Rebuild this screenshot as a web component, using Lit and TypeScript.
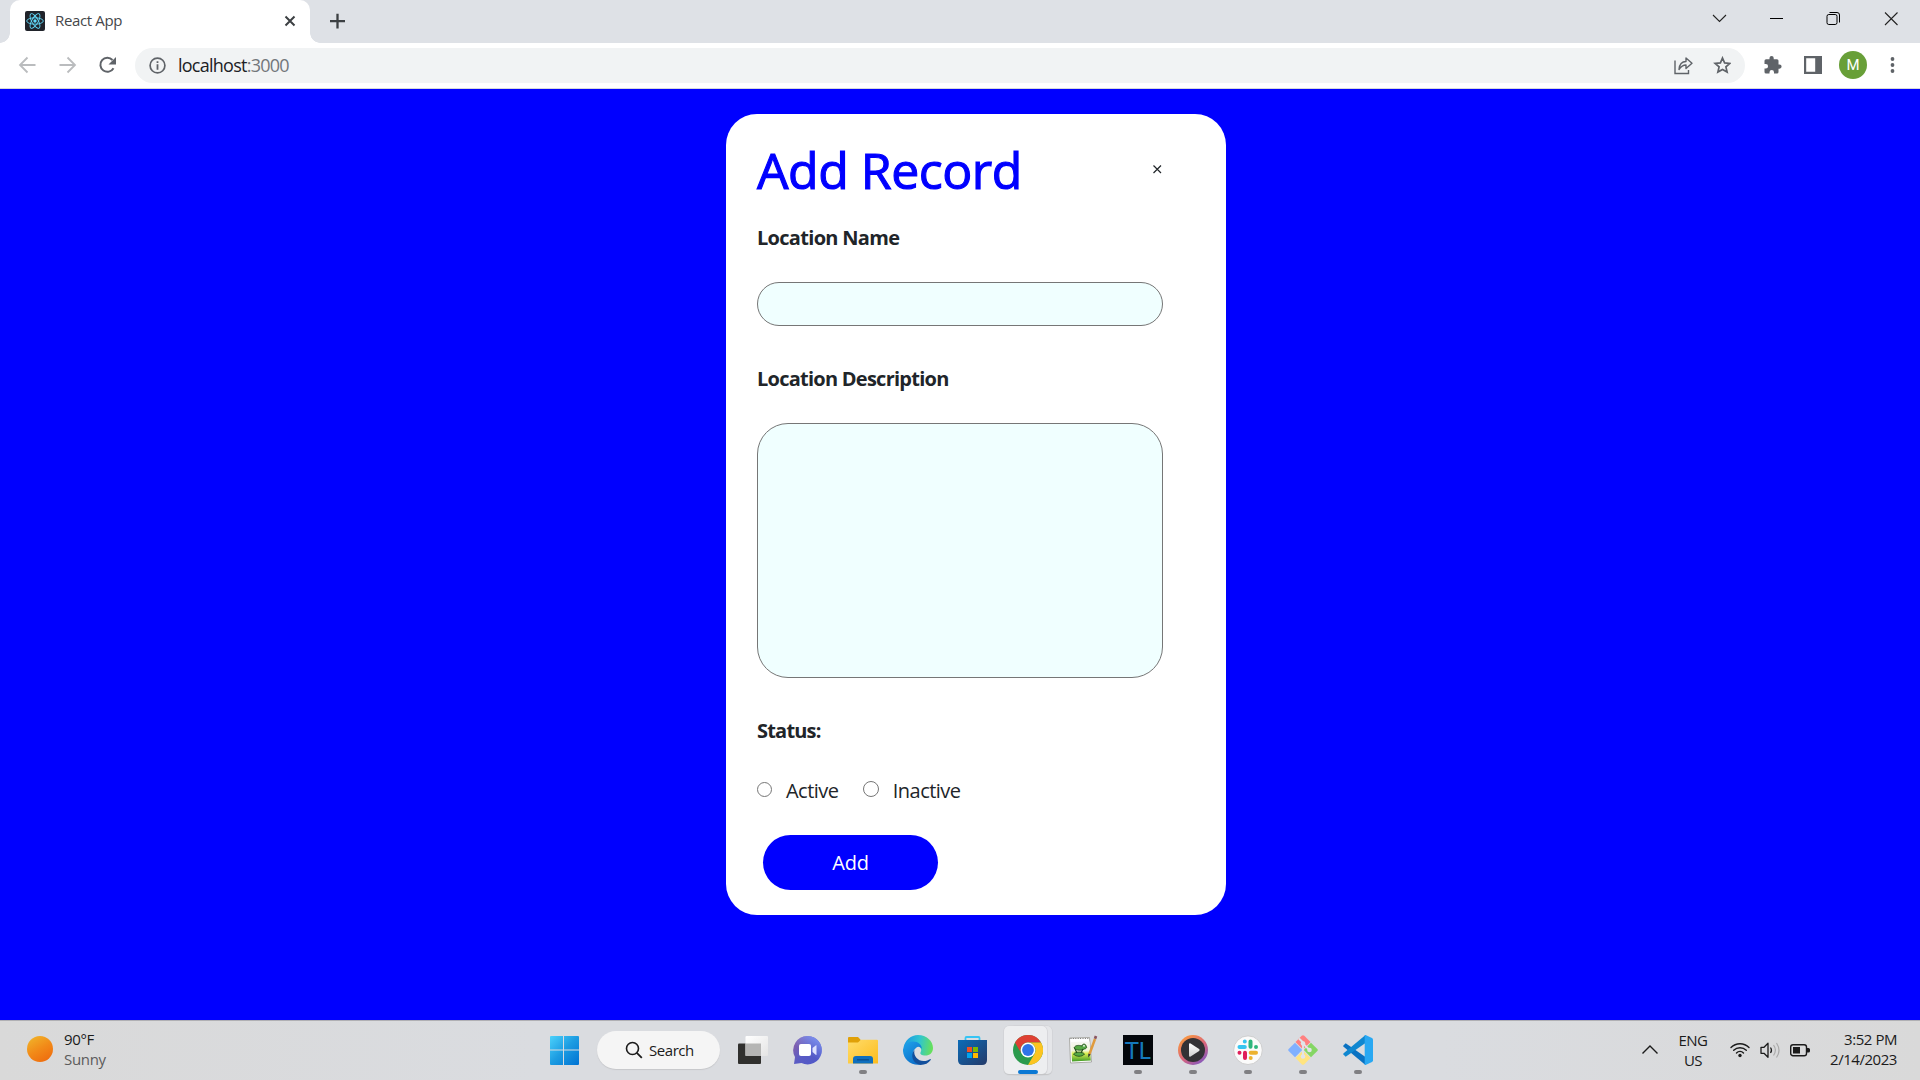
import { LitElement, html, css, svg } from "lit";
import { customElement } from "lit/decorators.js";

const icon = (w: number, h: number, body: unknown) =>
  html`<svg width=${w} height=${h} viewBox="0 0 ${w} ${h}" fill="none">${body}</svg>`;

const reactLogo = icon(20, 20, svg`
  <rect width="20" height="20" rx="2" fill="#20232a"/>
  <g stroke="#61dafb" stroke-width=".9">
    <ellipse cx="10" cy="10" rx="8.3" ry="3.2"/>
    <ellipse cx="10" cy="10" rx="8.3" ry="3.2" transform="rotate(60 10 10)"/>
    <ellipse cx="10" cy="10" rx="8.3" ry="3.2" transform="rotate(120 10 10)"/>
  </g><circle cx="10" cy="10" r="1.7" fill="#61dafb"/>`);

const windowsLogo = icon(30, 30, svg`
  <defs><linearGradient id="win" x1="0" y1="0" x2="30" y2="30" gradientUnits="userSpaceOnUse">
    <stop stop-color="#4fd5fd"/><stop offset=".5" stop-color="#1d9de2"/><stop offset="1" stop-color="#0072d3"/></linearGradient></defs>
  <path fill="url(#win)" d="M2 1h12v13.500H1V2a1 1 0 0 1 1-1zM15 1h14a1 1 0 0 1 1 1v12.500H15zM1 15.500h13V30H2a1 1 0 0 1-1-1zM15 15.500h15V29a1 1 0 0 1-1 1H15z"/>`);

const taskView = icon(30, 30, svg`
  <defs><linearGradient id="tv" x1="0" y1="0" x2="1" y2="1"><stop stop-color="#fff"/><stop offset="1" stop-color="#e4e4e4"/></linearGradient></defs>
  <rect x="0" y="8.500" width="23" height="20.500" rx="1" fill="#30302e"/>
  <rect x="7.500" y="1" width="22.500" height="20" rx="1" fill="url(#tv)"/>
  <rect x="7.500" y="8.500" width="15.500" height="12.500" fill="#b5b5b4"/>`);

const chat = icon(30, 30, svg`
  <defs><linearGradient id="ch" x1="3" y1="4" x2="26" y2="24" gradientUnits="userSpaceOnUse">
    <stop stop-color="#8a60a8"/><stop offset=".5" stop-color="#5a5cc4"/><stop offset="1" stop-color="#5058c8"/></linearGradient>
    <linearGradient id="ch2" x1="24" y1="2" x2="14" y2="18" gradientUnits="userSpaceOnUse"><stop stop-color="#7c92f0"/><stop offset="1" stop-color="#7c92f0" stop-opacity="0"/></linearGradient></defs>
  <path fill="url(#ch)" d="M15 1a14.200 14.200 0 1 1-6.500 27L1 29l1-7A14.200 14.200 0 0 1 15 1z"/>
  <path fill="url(#ch2)" d="M15 1a14.200 14.200 0 1 1-6.500 27L1 29l1-7A14.200 14.200 0 0 1 15 1z"/>
  <rect x="6" y="9" width="12" height="12" rx="2" fill="#fff"/>
  <path fill="#dfe3ff" d="M19.500 13l3.500-2.800q.5-.2.500.400v9q0 .6-.5.400L19.500 17z"/>`);

const folder = icon(30, 30, svg`
  <defs><linearGradient id="fo" x1="0" y1="0" x2="1" y2="1"><stop stop-color="#ffdc6a"/><stop offset="1" stop-color="#fcbc1d"/></linearGradient></defs>
  <path fill="#e0a008" d="M1 2h9l3 3.200-2 3H0V3a1 1 0 0 1 1-1z"/>
  <path fill="url(#fo)" d="M0 7.500h10l3-2.700h16a1 1 0 0 1 1 1V28.500H0z"/>
  <path fill="#0f6fbe" d="M8 21h14q3 0 3 3v4.500H5V24q0-3 3-3z"/>
  <path stroke="#0a4c8c" stroke-width="1.300" d="M9 24.800h12"/>`);

const edge = icon(30, 30, svg`
  <defs><linearGradient id="e1" x1="3" y1="8" x2="29" y2="12" gradientUnits="userSpaceOnUse"><stop stop-color="#1b9de2"/><stop offset=".5" stop-color="#30c5cf"/><stop offset="1" stop-color="#66e05c"/></linearGradient>
  <linearGradient id="e2" x1="2" y1="10" x2="16" y2="28" gradientUnits="userSpaceOnUse"><stop stop-color="#1c9be6"/><stop offset="1" stop-color="#0a6cc8"/></linearGradient></defs>
  <path fill="url(#e1)" d="M.5 12.500C2 5 8 0 15 0c8.500 0 15 6 15 13 0 5-3.500 7.500-7.500 7.500-4 0-6-1.500-4.800-3.500 1.800-3-1.200-7-6.200-7C6 10 2 12 .5 12.500z"/>
  <path fill="url(#e2)" d="M0 14.500C1 9.500 5.500 6.500 10 6.500c5.500 0 9 3.700 8.800 7.500-1.500-2.500-4-2.700-5.300-1.500C7 17 10 28 18.500 29.500 8 31.500-.5 24 0 14.500z"/>
  <path fill="#124f9c" d="M11.500 15c-1.500 6 3.500 11 9 11 3 0 5-1 6.500-1.800.7-.3 1 .2.700.7C25.500 28 22 29.800 17.500 29.900 9.500 28.500 7 20 11.500 15z"/>`);

const store = icon(30, 30, svg`
  <defs><linearGradient id="st" x1="0" y1="0" x2="1" y2="1"><stop stop-color="#0b6cb8"/><stop offset="1" stop-color="#243a69"/></linearGradient></defs>
  <path stroke="#36c4f4" stroke-width="1.800" d="M7.500 6.500V3q0-1 1-1h12q1 0 1 1v3.500"/>
  <path fill="url(#st)" d="M0 5h29v20q0 5-5 5H5q-5 0-5-5z"/>
  <path fill="#f25022" d="M9 12h5v5H9z"/><path fill="#7fba00" d="M15 12h5v5h-5z"/>
  <path fill="#00a4ef" d="M9 18h5v5H9z"/><path fill="#ffb900" d="M15 18h5v5h-5z"/>`);

const chrome = icon(30, 30, svg`
  <circle cx="15" cy="15" r="15" fill="#2a9a4c"/>
  <path fill="#de4033" d="M2 7.500A15 15 0 0 1 28 7.500H15A7.500 7.500 0 0 0 8.500 18.750z"/>
  <path fill="#fcc420" d="M28 7.500A15 15 0 0 1 15 30l6.500-11.250A7.500 7.500 0 0 0 15 7.500z"/>
  <circle cx="15" cy="15" r="7.400" fill="#fff"/><circle cx="15" cy="15" r="5.900" fill="#2f74e8"/>`);

const notepad = icon(30, 30, svg`
  <defs><linearGradient id="np" x1="0" y1="0" x2="0" y2="1"><stop stop-color="#f7f7f4"/><stop offset=".45" stop-color="#f3f6d8"/><stop offset=".6" stop-color="#d9ee50"/><stop offset="1" stop-color="#3f9b28"/></linearGradient></defs>
  <path fill="#fff" stroke="#9a9a94" stroke-width=".8" d="M1.500 3l20-.5 2 24.500-21 1z"/>
  <path fill="url(#np)" d="M3 7l18.500-.5 1.300 19L4 26.500z"/>
  <path stroke="#777" stroke-width="1" stroke-dasharray="1 1.400" d="M2.500 3.500h18"/>
  <path fill="#56a944" stroke="#24501c" stroke-width=".9" d="M6 13c1-3 5-3 8-2 0-2.500 4-2.500 4 0 1.500 1.500 0 3-2 3-1 1.500-8 2-10-1zM5.500 19c2-2.500 9-2.500 11 0-2 3-9 3-11 0z"/>
  <path stroke="#24501c" stroke-width="1.200" d="M7 14l2 4M15 14l-2 4"/><circle cx="16" cy="10.800" r=".9" fill="#fff"/>
  <path stroke="#e09b3e" stroke-width="2.500" d="M27 4l-5.500 15"/><path stroke="#8a5560" stroke-width="2.700" d="M28 1l-1 2.800"/>
  <path fill="#333" d="M20.300 18.500l2.400 1-2.500 3z"/>`);

const media = icon(30, 30, svg`
  <defs><linearGradient id="md" x1="4" y1="2" x2="24" y2="29" gradientUnits="userSpaceOnUse"><stop stop-color="#fb9a3c"/><stop offset=".55" stop-color="#d8647c"/><stop offset="1" stop-color="#8358c0"/></linearGradient>
  <linearGradient id="mp" x1="0" y1="0" x2="0" y2="1"><stop stop-color="#fff"/><stop offset="1" stop-color="#cfcfcf"/></linearGradient></defs>
  <circle cx="15" cy="15" r="15" fill="url(#md)"/><circle cx="15" cy="15" r="12" fill="#333235"/>
  <path fill="url(#mp)" d="M11 9.500q0-1.800 1.600-1l8.500 5.500q1.200 1 0 2l-8.500 5.500q-1.600.8-1.600-1z"/>`);

const slack = icon(30, 30, svg`
  <circle cx="15" cy="15.200" r="14.300" fill="#fbfbfb" stroke="#c6c6c6" stroke-width=".8"/>
  <g stroke-width="4" stroke-linecap="round">
    <path stroke="#36c5f0" d="M6.500 12h5.300M11.800 6.500v.01"/><path stroke="#2eb67d" d="M17.500 6.500v5.300M23 12v.01"/>
    <path stroke="#ecb22e" d="M17.700 17.700H23M17.700 23v.01"/><path stroke="#e01e5a" d="M12 17.700V23M6.500 17.700v.01"/></g>`);

const git = icon(30, 30, svg`
  <path fill="#ff8080" d="M13.700.7q1.300-1 2.600 0L22.500 7 15 14.500 7.500 7z"/>
  <path fill="#80b0ff" d="M7 7.800l7.200 7.200L7 22.300.7 16q-1-1 0-2z"/>
  <path fill="#84d664" d="M23 7.800L29.300 14q1 1 0 2L23 22.300 15.800 15z"/>
  <path fill="#ffe480" d="M15 15.700l7.500 7.300-6.200 6.300q-1.300 1-2.600 0L7.500 23z"/>
  <g stroke="#e2e4e8" stroke-width="1.900"><path d="M11 3.500l4 4v15M15.500 9l6 6"/></g>
  <g fill="#e2e4e8"><circle cx="15" cy="8.500" r="2.300"/><circle cx="21.500" cy="15" r="2.300"/><circle cx="15" cy="21.500" r="2.300"/></g>`);

const vscode = icon(30, 30, svg`
  <path fill="#0a72c2" d="M2.700 8.300L.6 10.200q-.8.800 0 1.600L22.500 30V22z"/>
  <path fill="#0f87d0" d="M2.700 21.700L.6 19.800q-.8-.8 0-1.600L22.500 0v8z"/>
  <path fill="#29a8f2" d="M22.500 0L29 3q1 .5 1 1.700v20.600q0 1.200-1 1.700l-6.500 3q-.8.300-.8-.5V.500q0-.8.800-.5z"/>`);

interface TaskApp { art: unknown; running?: boolean; active?: boolean }
const apps: TaskApp[] = [
  { art: taskView },
  { art: chat },
  { art: folder, running: true },
  { art: edge },
  { art: store },
  { art: chrome, active: true },
  { art: notepad },
  { art: html`<span class="tl">TL</span>`, running: true },
  { art: media, running: true },
  { art: slack, running: true },
  { art: git, running: true },
  { art: vscode, running: true },
];

@customElement("browser-chrome")
class BrowserChrome extends LitElement {
  static styles = css`
    :host { display: block; font-family: "Open Sans", "Noto Sans", sans-serif; }
    svg { display: block; flex: none; }
    .strip { display: flex; height: 43px; background: #dee1e6; }
    .tab { display: flex; align-items: center; box-sizing: border-box; width: 300px; margin-left: 10px; padding: 0 14px 1px 15px; background: #fff; border-radius: 10px 10px 0 0; position: relative; }
    .tab::before, .tab::after { content: ""; position: absolute; bottom: 0; width: 10px; height: 10px; }
    .tab::before { left: -10px; background: radial-gradient(circle at 0 0, transparent 9.500px, #fff 10px); }
    .tab::after { right: -10px; background: radial-gradient(circle at 100% 0, transparent 9.500px, #fff 10px); }
    .title { flex: 1; margin-left: 10px; padding-bottom: 2px; font-size: 15px; letter-spacing: -0.35px; color: #45474a; }
    .plus { margin: 13px 0 0 19px; }
    .controls { display: flex; margin-left: auto; }
    .controls svg { margin-top: 10px; }
    .bar { display: flex; align-items: center; box-sizing: border-box; height: 46px; padding: 0 0 1px 18px; background: #fff; border-bottom: 1px solid #d5d7dc; }
    .nav { display: flex; gap: 20px; }
    .omni { display: flex; align-items: center; box-sizing: border-box; width: 1610px; height: 35px; margin-left: 17px; padding: 0 14px; border-radius: 18px; background: #f1f3f4; }
    .url { flex: 1; margin-left: 12px; font-size: 18px; line-height: 34px; letter-spacing: -0.75px; color: #202124; }
    .port { color: #73777b; }
    .share { margin-right: 19px; }
    .tools { display: flex; align-items: center; margin-left: 18px; }
    .panel { margin-left: 21px; }
    .avatar { display: flex; align-items: center; justify-content: center; width: 28px; height: 28px; margin: 0 15px 0 17px; border-radius: 50%; background: #689f38; color: #fff; font: 15px/28px Roboto, sans-serif; }
  `;
  render() {
    return html`
      <div class="strip">
        <div class="tab">
          ${reactLogo}<span class="title">React App</span>
          ${icon(12, 12, svg`<path stroke="#3c4043" stroke-width="2" d="M1.500 1.500l9 9M10.500 1.500l-9 9"/>`)}
        </div>
        <div class="plus">${icon(16, 16, svg`<path stroke="#3c4043" stroke-width="2.300" d="M8.500 .8v14.600M1 8.200h15"/>`)}</div>
        <div class="controls">
          ${icon(57, 18, svg`<path stroke="#222" stroke-width="1.100" d="M22 5l6.500 6.500L35 5"/>`)}
          ${icon(57, 18, svg`<path stroke="#000" stroke-width="1" d="M22 8.500h13"/>`)}
          ${icon(57, 18, svg`<rect x="22" y="4.500" width="10" height="10" rx="1.800" stroke="#000"/><path stroke="#000" d="M24.500 2.500h7.500q2.500 0 2.500 2.500v7.500"/>`)}
          ${icon(58, 18, svg`<path stroke="#222" stroke-width="1.100" d="M23 2.500l12.500 12.500M35.500 2.500L23 15"/>`)}
        </div>
      </div>
      <div class="bar">
        <div class="nav">
          ${icon(20, 20, svg`<path stroke="#babcbe" stroke-width="1.800" d="M17.500 10H2.500M9.500 2.500L2 10l7.500 7.500"/>`)}
          ${icon(20, 20, svg`<path stroke="#babcbe" stroke-width="1.800" d="M1.500 10h15M9.500 2.500l7.500 7.500-7.500 7.500"/>`)}
          ${icon(20, 20, svg`<path stroke="#5f6368" stroke-width="2" d="M15.500 13.200A7 7 0 1 1 14.500 5"/><path fill="#5f6368" d="M18 2v7.500h-7.500z"/>`)}
        </div>
        <div class="omni">
          ${icon(17, 17, svg`<circle cx="8.500" cy="8.500" r="7.400" stroke="#5f6368" stroke-width="1.700"/><path fill="#5f6368" d="M7.600 4.300h1.800v1.800H7.600zM7.600 7.300h1.800v5.500H7.600z"/>`)}
          <span class="url">localhost<span class="port">:3000</span></span>
          <span class="share">${icon(22, 20, svg`<path stroke="#5f6368" stroke-width="1.400" d="M3 5.500v13h13.500v-3.500"/><path stroke="#5f6368" stroke-width="1.400" stroke-linejoin="round" d="M7 14.500c.5-5.500 3-8 7-8V3l6 5.200-6 5.300V10c-3 0-5 1.500-7 4.500z"/>`)}</span>
          ${icon(18, 18, svg`<path stroke="#5f6368" stroke-width="1.700" d="M9.500 2l2.100 4.900 5.300.5-4 3.500 1.200 5.200L9.500 13.400l-4.600 2.700 1.200-5.200-4-3.500 5.300-.5z"/>`)}
        </div>
        <div class="tools">
          ${icon(20, 20, svg`<path fill="#5f6368" d="M16 9.500h-1V5.800q0-1.500-1.500-1.500H10.200V3a2.100 2.100 0 0 0-4.200 0v1.300H2.600Q1 4.300 1 5.800V9h1.300a2.200 2.200 0 0 1 0 4.500H1v3.400q0 1.600 1.600 1.600H6v-1.300a2.200 2.200 0 0 1 4.500 0v1.300h3q1.500 0 1.500-1.500v-3.300h1a2.100 2.100 0 0 0 0-4.200z" transform="translate(.5 0)"/>`)}
          <span class="panel">${icon(18, 18, svg`<path fill="#5f6368" fill-rule="evenodd" d="M0 0h18v18H0zM2.200 2.200v13.600h9V2.200z"/>`)}</span>
          <div class="avatar">M</div>
          ${icon(20, 20, svg`<g fill="#5f6368"><circle cx="10.500" cy="4" r="1.900"/><circle cx="10.500" cy="10" r="1.900"/><circle cx="10.500" cy="16" r="1.900"/></g>`)}
        </div>
      </div>`;
  }
}

@customElement("record-form")
class RecordForm extends LitElement {
  static styles = css`
    :host { display: block; font-family: "Open Sans", "Noto Sans", sans-serif; font-size: 20px; color: #212529; }
    .card { display: flex; flex-direction: column; box-sizing: border-box; width: 500px; height: 801px; padding: 26px 63px 0 31px; background: #fff; border-radius: 31px; }
    .head { display: flex; align-items: center; justify-content: space-between; height: 60px; margin-bottom: 22px; }
    h1 { margin: 0; font-size: 50px; line-height: 60px; font-weight: 500; letter-spacing: -0.5px; color: #00f; white-space: nowrap; -webkit-text-stroke: 1.100px #00f; }
    .close { display: block; margin: 0 1px 1px 0; }
    .label { box-sizing: border-box; height: 30px; padding-top: 1px; line-height: 30px; font-weight: 700; letter-spacing: -0.7px; }
    .label.desc { letter-spacing: -0.75px; }
    .label.status { letter-spacing: -0.8px; }
    input.name, textarea { display: block; box-sizing: border-box; width: 406px; margin: 30px 0 37px; padding: 8px 20px; background: azure; border: 1px solid #767676; font: inherit; resize: none; outline: none; }
    input.name { height: 44px; border-radius: 22px; }
    textarea { height: 255px; border-radius: 31px; }
    .radios { display: flex; align-items: center; height: 30px; margin: 30px 0; letter-spacing: -0.55px; }
    .radios span { padding-top: 2px; line-height: 30px; }
    .radio { appearance: none; box-sizing: border-box; width: 15px; height: 15px; margin: 0 14px 2px 0; border: 1px solid #767676; border-radius: 50%; background: #fff; }
    .radio.second { width: 16px; height: 16px; margin: 0 13.500px 2px 25px; }
    button { width: 175px; height: 55px; margin-left: 6px; padding: 0; border: 0; border-radius: 27.500px; background: #00f; color: #fff; font: inherit; letter-spacing: -0.2px; }
  `;
  render() {
    return html`<form class="card">
      <div class="head"><h1>Add Record</h1>
        <svg class="close" width="9" height="9" viewBox="0 0 9 9"><path stroke="#212529" stroke-width="1.200" d="M.5.500l7.500 7.500M8 .5L.5 8"/></svg></div>
      <div class="label">Location Name</div>
      <input class="name" />
      <div class="label desc">Location Description</div>
      <textarea></textarea>
      <div class="label status">Status:</div>
      <div class="radios">
        <input class="radio" type="radio" name="s" /><span>Active</span>
        <input class="radio second" type="radio" name="s" /><span>Inactive</span>
      </div>
      <button type="button">Add</button>
    </form>`;
  }
}

@customElement("task-bar")
class TaskBar extends LitElement {
  static styles = css`
    :host { display: block; font-family: "Open Sans", "Noto Sans", sans-serif; font-size: 15px; color: #1b1b1b; }
    svg { display: block; flex: none; }
    .bar { display: flex; box-sizing: border-box; height: 60px; border-top: 1px solid #b0b0b4; background: linear-gradient(90deg, #d9d9d9, #dadce0 28%, #dadce0 75%, #d9d9d9); }
    .weather { display: flex; align-items: center; width: 549px; box-sizing: border-box; padding: 0 0 3px 27px; }
    .sun { width: 26px; height: 26px; margin: 0 11px 0 0; border-radius: 50%; background: linear-gradient(150deg, #f0b92c, #f28a18 50%, #ee650c); }
    .two { line-height: 20px; letter-spacing: -0.35px; }
    .muted { color: #5c5c5c; letter-spacing: -0.3px; }
    .start { margin: 14px 0 0; }
    .search { display: flex; align-items: center; box-sizing: border-box; width: 123px; height: 38px; margin: 10px 5px 0 18px; padding-left: 28px; border-radius: 19px; background: #f5f5f5; box-shadow: 0 1px 1px #c6c7ca; letter-spacing: -0.45px; }
    .search svg { margin-right: 6px; }
    .app { display: flex; flex-direction: column; align-items: center; box-sizing: border-box; width: 55px; padding-top: 14px; position: relative; }
    .art, .dot { position: relative; }
    .dot { width: 8px; height: 4px; margin-top: 5px; border-radius: 2px; background: #808083; }
    .dot.wide { width: 20px; background: #0a78d4; }
    .tile { position: absolute; left: 4px; top: 5px; width: 43px; height: 48px; border-radius: 5px; background: #edeef0; box-shadow: 0 0 0 .5px #cfd0d4, 0 1px 1px #bbb; }
    .tile.back { left: 10px; width: 42px; background: #e5e6e9; }
    .tl { display: block; width: 30px; height: 30px; background: #03060b; color: #1478bc; font: 24px/30px Lato, sans-serif; letter-spacing: -0.5px; text-align: center; }
    .tray { display: flex; align-items: center; margin-left: auto; padding: 0 23px 1px 0; }
    .lang { width: 50px; margin-left: 9px; text-align: center; letter-spacing: -0.5px; }
    .signals { display: flex; align-items: center; gap: 10px; margin: 0 20px 0 12px; }
    .clock { width: 67px; padding-bottom: 2px; text-align: right; letter-spacing: -0.45px; white-space: nowrap; }
  `;
  render() {
    return html`<div class="bar">
      <div class="weather"><div class="sun"></div>
        <div class="two"><div>90°F</div><div class="muted">Sunny</div></div></div>
      <div class="start">${windowsLogo}</div>
      <div class="search">
        ${icon(18, 18, svg`<circle cx="7.500" cy="7.500" r="6" stroke="#1b1b1b" stroke-width="1.600"/><path stroke="#1b1b1b" stroke-width="1.800" d="M11.800 11.800l5 5"/>`)}
        <span>Search</span></div>
      ${apps.map((a) => html`<div class="app">
        ${a.active ? html`<div class="tile back"></div><div class="tile"></div>` : ""}
        <div class="art">${a.art}</div>
        ${a.active ? html`<div class="dot wide"></div>` : a.running ? html`<div class="dot"></div>` : ""}
      </div>`)}
      <div class="tray">
        ${icon(18, 12, svg`<path stroke="#1b1b1b" stroke-width="1.400" d="M1.500 9.500L9 2l7.500 7.500"/>`)}
        <div class="two lang"><div>ENG</div><div>US</div></div>
        <div class="signals">
          ${icon(20, 18, svg`<g stroke="#1b1b1b" stroke-width="1.400" stroke-linecap="round"><path d="M1 6.500a12.700 12.700 0 0 1 18 0M3.700 9.300a8.900 8.900 0 0 1 12.600 0M6.500 12a5 5 0 0 1 7 0"/></g><circle cx="10" cy="14.500" r="1.700" fill="#1b1b1b"/>`)}
          ${icon(20, 18, svg`<path stroke="#1b1b1b" stroke-width="1.300" stroke-linejoin="round" d="M1 6.300h3l4-4v14l-4-4H1z"/><path stroke="#1b1b1b" stroke-width="1.200" d="M10.500 6.500q2 2.800 0 5.500"/><path stroke="#aaa" stroke-width="1.200" d="M13.500 4q3.800 5 0 10.500M16.500 2q5 7.500 0 14.500"/>`)}
          ${icon(20, 18, svg`<rect x=".7" y="3.700" width="15.800" height="11" rx="2.300" stroke="#1b1b1b" stroke-width="1.400"/><path fill="#1b1b1b" d="M3 6h7v6.500H3zM17 7h1.500q1.500 0 1.500 1.500v1.500q0 1.500-1.500 1.500H17z"/>`)}
        </div>
        <div class="two clock"><div>3:52 PM</div><div>2/14/2023</div></div>
      </div>
    </div>`;
  }
}

@customElement("app-root")
class AppRoot extends LitElement {
  static styles = css`
    :host { display: flex; flex-direction: column; width: 1920px; height: 1080px; overflow: hidden; background: #00f; }
    .page { flex: 1; box-sizing: border-box; padding: 25px 0 0 726px; background: #00f; }
  `;
  render() {
    return html`<browser-chrome></browser-chrome>
      <div class="page"><record-form></record-form></div>
      <task-bar></task-bar>`;
  }
}
